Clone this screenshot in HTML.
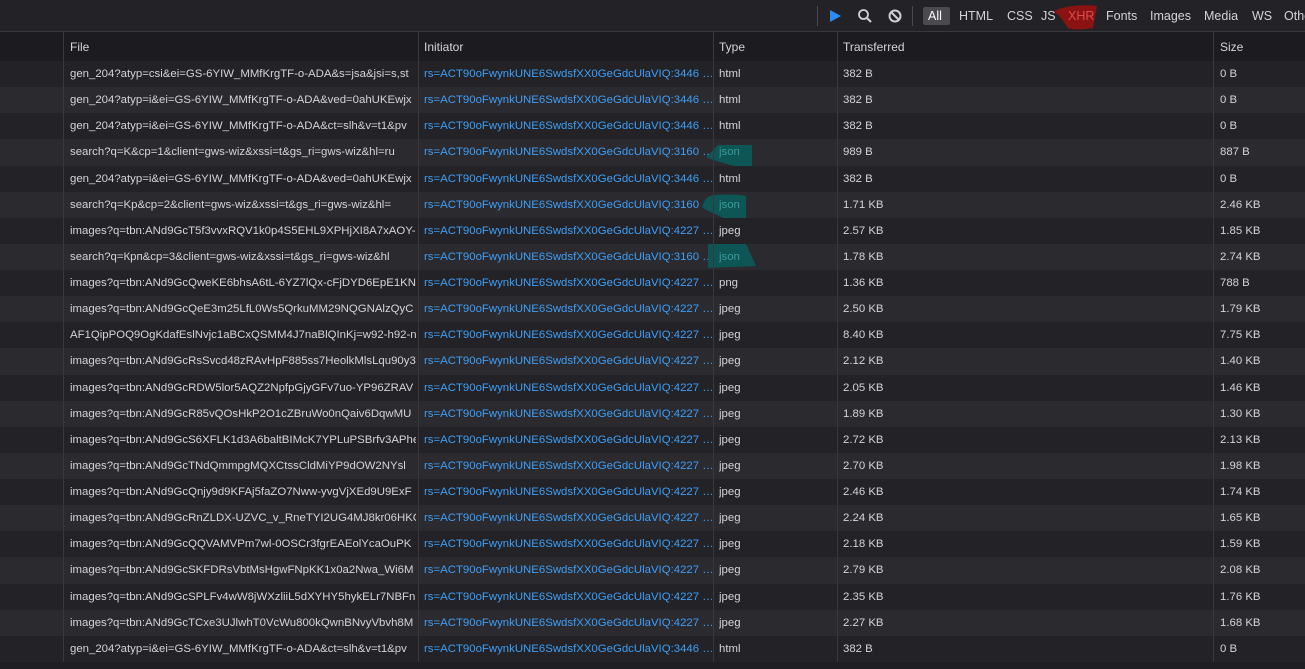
<!DOCTYPE html><html><head><style>
body{margin:0;width:1305px;height:669px;background:#1f1e23;font-family:"Liberation Sans",sans-serif;font-size:12px;color:#d4d4d8;overflow:hidden;position:relative}
.tb{position:absolute;left:0;top:0;width:1305px;height:31px;background:#232327;border-bottom:1px solid #38383d}
.hd{position:absolute;left:0;top:32px;width:1305px;height:29px;background:#1c1b20;border-bottom:1px solid #38383d}
.r{position:absolute;left:0;width:1305px;height:26.13px;line-height:26px;white-space:nowrap;font-size:11.4px}
.r:nth-child(odd){background:#232327}.r:nth-child(even){background:#2b2a2f}
.c{position:absolute;top:0;overflow:hidden}
.f{left:70px;width:346px}.i{left:424px;width:288px;color:#3f9ef5}.t{left:719px}.x{left:843px}.s{left:1220px}
.v{position:absolute;top:32px;height:630px;width:1px;background:#38383d}
.h{position:absolute;top:40px}
</style></head><body>
<div class="tb">
<div style="position:absolute;left:817px;top:6px;width:1px;height:20px;background:#4a4a4f"></div>
<svg style="position:absolute;left:828px;top:9px" width="14" height="14"><path d="M2 1L13 7L2 13Z" fill="#2a8cf0"/></svg>
<svg style="position:absolute;left:857px;top:8px" width="16" height="16"><circle cx="6.5" cy="6.5" r="4.5" fill="none" stroke="#d0d0d4" stroke-width="1.8"/><path d="M10 10L14 14" stroke="#d0d0d4" stroke-width="2"/></svg>
<svg style="position:absolute;left:887px;top:8px" width="16" height="16"><circle cx="8" cy="8" r="5.5" fill="none" stroke="#d0d0d4" stroke-width="2"/><path d="M4 4L12 12" stroke="#d0d0d4" stroke-width="2"/></svg>
<div style="position:absolute;left:912px;top:6px;width:1px;height:20px;background:#4a4a4f"></div>
<div style="position:absolute;left:923px;top:7px;width:27px;height:18px;background:#4a4a4f;border-radius:2px"></div>
<svg style="position:absolute;left:1052px;top:2px" width="46" height="28"><path d="M2 9C12 4 30 2 45 4L41 26C30 28 20 28 16 26C12 20 8 14 2 9Z" fill="#8a1212"/></svg>
<div style="position:absolute;top:9px;left:0;font-size:12.5px">
<span style="position:absolute;left:928px;color:#fff">All</span>
<span style="position:absolute;left:959px">HTML</span>
<span style="position:absolute;left:1007px">CSS</span>
<span style="position:absolute;left:1041px">JS</span>
<span style="position:absolute;left:1068px;color:#e04a4a">XHR</span>
<span style="position:absolute;left:1106px">Fonts</span>
<span style="position:absolute;left:1150px">Images</span>
<span style="position:absolute;left:1204px">Media</span>
<span style="position:absolute;left:1252px">WS</span>
<span style="position:absolute;left:1284px">Other</span>
</div></div>
<div class="hd"><span class="h" style="left:70px;top:8px">File</span><span class="h" style="left:424px;top:8px">Initiator</span><span class="h" style="left:719px;top:8px">Type</span><span class="h" style="left:843px;top:8px">Transferred</span><span class="h" style="left:1220px;top:8px">Size</span></div>
<div id="rows" style="position:absolute;left:0;top:61px;width:1305px">
<div class="r" style="top:0px"><span class="c f">gen_204?atyp=csi&amp;ei=GS-6YIW_MMfKrgTF-o-ADA&amp;s=jsa&amp;jsi=s,st</span><span class="c i">rs=ACT90oFwynkUNE6SwdsfXX0GeGdcUlaVIQ:3446 …</span><span class="c t">html</span><span class="c x">382 B</span><span class="c s">0 B</span></div>
<div class="r" style="top:26.13px"><span class="c f">gen_204?atyp=i&amp;ei=GS-6YIW_MMfKrgTF-o-ADA&amp;ved=0ahUKEwjx</span><span class="c i">rs=ACT90oFwynkUNE6SwdsfXX0GeGdcUlaVIQ:3446 …</span><span class="c t">html</span><span class="c x">382 B</span><span class="c s">0 B</span></div>
<div class="r" style="top:52.26px"><span class="c f">gen_204?atyp=i&amp;ei=GS-6YIW_MMfKrgTF-o-ADA&amp;ct=slh&amp;v=t1&amp;pv</span><span class="c i">rs=ACT90oFwynkUNE6SwdsfXX0GeGdcUlaVIQ:3446 …</span><span class="c t">html</span><span class="c x">382 B</span><span class="c s">0 B</span></div>
<div class="r" style="top:78.39px"><span class="c f">search?q=K&amp;cp=1&amp;client=gws-wiz&amp;xssi=t&amp;gs_ri=gws-wiz&amp;hl=ru</span><span class="c i">rs=ACT90oFwynkUNE6SwdsfXX0GeGdcUlaVIQ:3160 …</span><svg class="c" style="left:704px;top:5px" width="50" height="24"><path d="M14 1L48 1L48 22L30 22C20 19 10 17 2 13Z" fill="#0e5656"/></svg><span class="c t" style="color:#3a9a9a">json</span><span class="c x">989 B</span><span class="c s">887 B</span></div>
<div class="r" style="top:104.52px"><span class="c f">gen_204?atyp=i&amp;ei=GS-6YIW_MMfKrgTF-o-ADA&amp;ved=0ahUKEwjx</span><span class="c i">rs=ACT90oFwynkUNE6SwdsfXX0GeGdcUlaVIQ:3446 …</span><span class="c t">html</span><span class="c x">382 B</span><span class="c s">0 B</span></div>
<div class="r" style="top:130.65px"><span class="c f">search?q=Kp&amp;cp=2&amp;client=gws-wiz&amp;xssi=t&amp;gs_ri=gws-wiz&amp;hl=</span><span class="c i">rs=ACT90oFwynkUNE6SwdsfXX0GeGdcUlaVIQ:3160 …</span><svg class="c" style="left:700px;top:1px" width="50" height="26"><path d="M10 3C20 1 35 1 46 3L46 26L26 26C18 22 10 20 2 14C4 8 6 5 10 3Z" fill="#0e5656"/></svg><span class="c t" style="color:#3a9a9a">json</span><span class="c x">1.71 KB</span><span class="c s">2.46 KB</span></div>
<div class="r" style="top:156.78px"><span class="c f">images?q=tbn:ANd9GcT5f3vvxRQV1k0p4S5EHL9XPHjXI8A7xAOY-</span><span class="c i">rs=ACT90oFwynkUNE6SwdsfXX0GeGdcUlaVIQ:4227 …</span><span class="c t">jpeg</span><span class="c x">2.57 KB</span><span class="c s">1.85 KB</span></div>
<div class="r" style="top:182.91px"><span class="c f">search?q=Крп&amp;cp=3&amp;client=gws-wiz&amp;xssi=t&amp;gs_ri=gws-wiz&amp;hl</span><span class="c i">rs=ACT90oFwynkUNE6SwdsfXX0GeGdcUlaVIQ:3160 …</span><svg class="c" style="left:706px;top:-2px" width="52" height="30"><path d="M2 2L40 2L50 24L2 26Z" fill="#0e5656"/></svg><span class="c t" style="color:#3a9a9a">json</span><span class="c x">1.78 KB</span><span class="c s">2.74 KB</span></div>
<div class="r" style="top:209.04px"><span class="c f">images?q=tbn:ANd9GcQweKE6bhsA6tL-6YZ7lQx-cFjDYD6EpE1KN</span><span class="c i">rs=ACT90oFwynkUNE6SwdsfXX0GeGdcUlaVIQ:4227 …</span><span class="c t">png</span><span class="c x">1.36 KB</span><span class="c s">788 B</span></div>
<div class="r" style="top:235.17px"><span class="c f">images?q=tbn:ANd9GcQeE3m25LfL0Ws5QrkuMM29NQGNAlzQyC</span><span class="c i">rs=ACT90oFwynkUNE6SwdsfXX0GeGdcUlaVIQ:4227 …</span><span class="c t">jpeg</span><span class="c x">2.50 KB</span><span class="c s">1.79 KB</span></div>
<div class="r" style="top:261.3px"><span class="c f">AF1QipPOQ9OgKdafEslNvjc1aBCxQSMM4J7naBlQInKj=w92-h92-n</span><span class="c i">rs=ACT90oFwynkUNE6SwdsfXX0GeGdcUlaVIQ:4227 …</span><span class="c t">jpeg</span><span class="c x">8.40 KB</span><span class="c s">7.75 KB</span></div>
<div class="r" style="top:287.43px"><span class="c f">images?q=tbn:ANd9GcRsSvcd48zRAvHpF885ss7HeolkMlsLqu90y3</span><span class="c i">rs=ACT90oFwynkUNE6SwdsfXX0GeGdcUlaVIQ:4227 …</span><span class="c t">jpeg</span><span class="c x">2.12 KB</span><span class="c s">1.40 KB</span></div>
<div class="r" style="top:313.56px"><span class="c f">images?q=tbn:ANd9GcRDW5lor5AQZ2NpfpGjyGFv7uo-YP96ZRAV</span><span class="c i">rs=ACT90oFwynkUNE6SwdsfXX0GeGdcUlaVIQ:4227 …</span><span class="c t">jpeg</span><span class="c x">2.05 KB</span><span class="c s">1.46 KB</span></div>
<div class="r" style="top:339.69px"><span class="c f">images?q=tbn:ANd9GcR85vQOsHkP2O1cZBruWo0nQaiv6DqwMU</span><span class="c i">rs=ACT90oFwynkUNE6SwdsfXX0GeGdcUlaVIQ:4227 …</span><span class="c t">jpeg</span><span class="c x">1.89 KB</span><span class="c s">1.30 KB</span></div>
<div class="r" style="top:365.82px"><span class="c f">images?q=tbn:ANd9GcS6XFLK1d3A6baltBIMcK7YPLuPSBrfv3APhe</span><span class="c i">rs=ACT90oFwynkUNE6SwdsfXX0GeGdcUlaVIQ:4227 …</span><span class="c t">jpeg</span><span class="c x">2.72 KB</span><span class="c s">2.13 KB</span></div>
<div class="r" style="top:391.95px"><span class="c f">images?q=tbn:ANd9GcTNdQmmpgMQXCtssCldMiYP9dOW2NYsl</span><span class="c i">rs=ACT90oFwynkUNE6SwdsfXX0GeGdcUlaVIQ:4227 …</span><span class="c t">jpeg</span><span class="c x">2.70 KB</span><span class="c s">1.98 KB</span></div>
<div class="r" style="top:418.08px"><span class="c f">images?q=tbn:ANd9GcQnjy9d9KFAj5faZO7Nww-yvgVjXEd9U9ExF</span><span class="c i">rs=ACT90oFwynkUNE6SwdsfXX0GeGdcUlaVIQ:4227 …</span><span class="c t">jpeg</span><span class="c x">2.46 KB</span><span class="c s">1.74 KB</span></div>
<div class="r" style="top:444.21px"><span class="c f">images?q=tbn:ANd9GcRnZLDX-UZVC_v_RneTYI2UG4MJ8kr06HKC</span><span class="c i">rs=ACT90oFwynkUNE6SwdsfXX0GeGdcUlaVIQ:4227 …</span><span class="c t">jpeg</span><span class="c x">2.24 KB</span><span class="c s">1.65 KB</span></div>
<div class="r" style="top:470.34px"><span class="c f">images?q=tbn:ANd9GcQQVAMVPm7wl-0OSCr3fgrEAEolYcaOuPK</span><span class="c i">rs=ACT90oFwynkUNE6SwdsfXX0GeGdcUlaVIQ:4227 …</span><span class="c t">jpeg</span><span class="c x">2.18 KB</span><span class="c s">1.59 KB</span></div>
<div class="r" style="top:496.47px"><span class="c f">images?q=tbn:ANd9GcSKFDRsVbtMsHgwFNpKK1x0a2Nwa_Wi6M</span><span class="c i">rs=ACT90oFwynkUNE6SwdsfXX0GeGdcUlaVIQ:4227 …</span><span class="c t">jpeg</span><span class="c x">2.79 KB</span><span class="c s">2.08 KB</span></div>
<div class="r" style="top:522.6px"><span class="c f">images?q=tbn:ANd9GcSPLFv4wW8jWXzliiL5dXYHY5hykELr7NBFn</span><span class="c i">rs=ACT90oFwynkUNE6SwdsfXX0GeGdcUlaVIQ:4227 …</span><span class="c t">jpeg</span><span class="c x">2.35 KB</span><span class="c s">1.76 KB</span></div>
<div class="r" style="top:548.73px"><span class="c f">images?q=tbn:ANd9GcTCxe3UJlwhT0VcWu800kQwnBNvyVbvh8M</span><span class="c i">rs=ACT90oFwynkUNE6SwdsfXX0GeGdcUlaVIQ:4227 …</span><span class="c t">jpeg</span><span class="c x">2.27 KB</span><span class="c s">1.68 KB</span></div>
<div class="r" style="top:574.86px"><span class="c f">gen_204?atyp=i&amp;ei=GS-6YIW_MMfKrgTF-o-ADA&amp;ct=slh&amp;v=t1&amp;pv</span><span class="c i">rs=ACT90oFwynkUNE6SwdsfXX0GeGdcUlaVIQ:3446 …</span><span class="c t">html</span><span class="c x">382 B</span><span class="c s">0 B</span></div>
</div>
<div class="v" style="left:63px"></div><div class="v" style="left:418px"></div><div class="v" style="left:713px"></div><div class="v" style="left:837px"></div><div class="v" style="left:1213px"></div>
</body></html>
